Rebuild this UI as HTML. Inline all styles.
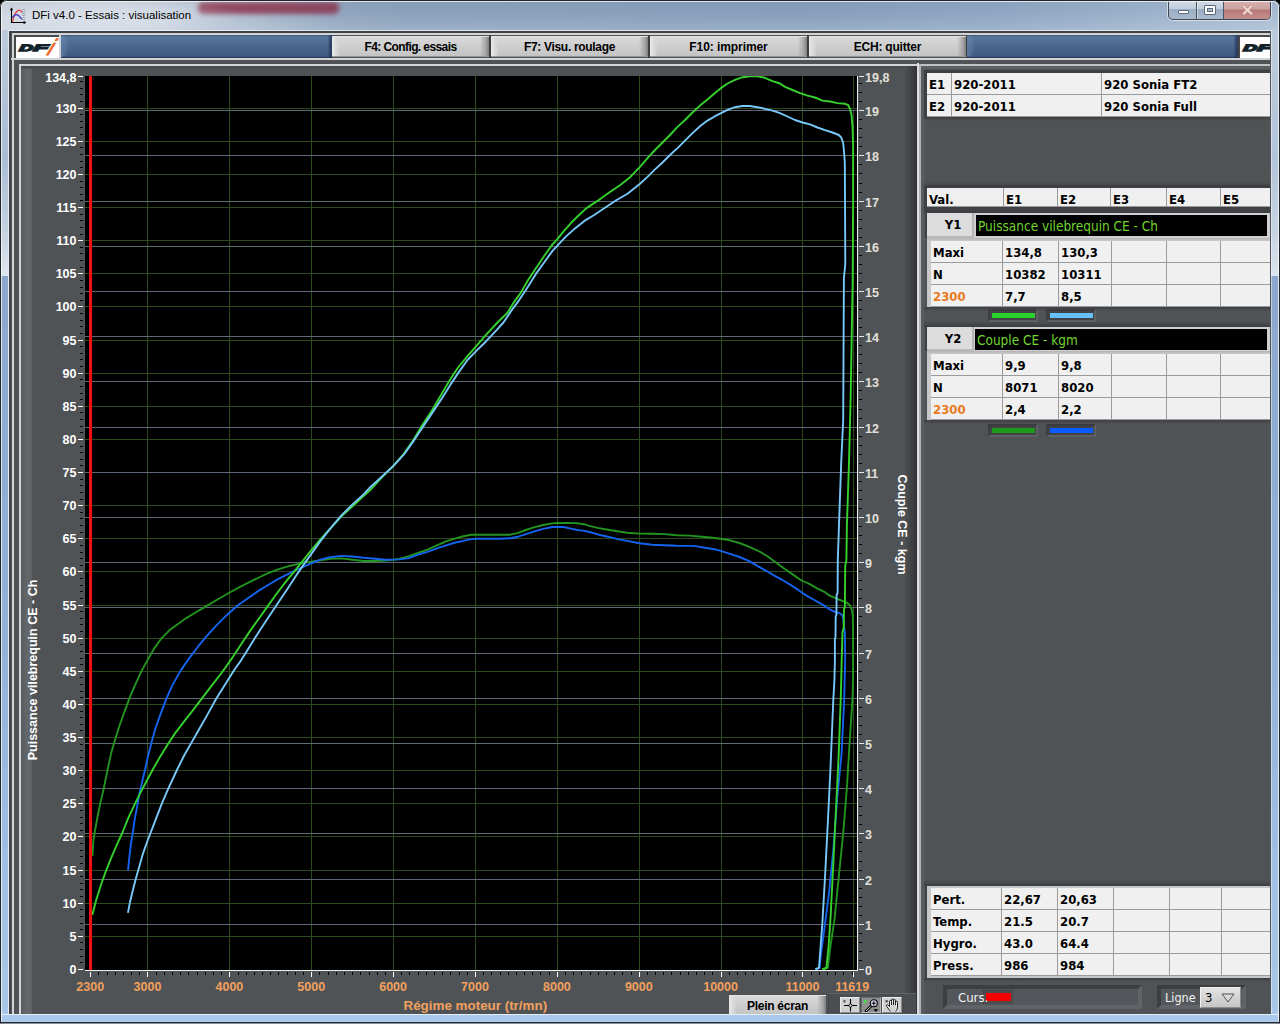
<!DOCTYPE html>
<html lang="fr"><head><meta charset="utf-8"><title>DFi v4.0 - Essais : visualisation</title>
<style>
html,body{margin:0;padding:0;background:#000;}
body{width:1280px;height:1024px;overflow:hidden;position:relative;font-family:"DejaVu Sans Condensed","Liberation Sans",sans-serif;}
div{position:absolute;box-sizing:border-box;}
#win{left:0;top:0;width:1280px;height:1024px;border-radius:7px 7px 2px 2px;overflow:hidden;
 background:linear-gradient(90deg,#cdd5e0 0px,#c3cedc 160px,#b3c1d3 230px,#9db0c6 300px,#91a6bf 345px,#8da3bd 400px,#8ba2bd 560px,#88a0bd 800px,#90a8c4 1000px,#a9bdd3 1280px);}
#win:before{content:"";position:absolute;left:0;top:0;right:0;bottom:0;border:1px solid #20252c;border-bottom:none;border-radius:7px 7px 2px 2px;z-index:50;pointer-events:none}
#win:after{content:"";position:absolute;left:1px;top:1px;right:1px;bottom:2px;border:1px solid rgba(255,255,255,.75);border-bottom:none;border-radius:6px 6px 1px 1px;z-index:50;pointer-events:none}
#frameL{left:0;top:30px;width:9px;height:994px;z-index:40;border-right:1px solid #e2ebf5;background:linear-gradient(180deg,#bccadb 0,#aabdd3 130px,#c4d1e0 200px,#dfe6ef 246px,#8ba8cc 246px,#93b1d6 600px,#a9c8e9 994px)}
#frameR{left:1270px;top:30px;width:10px;height:994px;z-index:40;border-left:1px solid #505458;box-shadow:inset 1px 0 0 rgba(255,255,255,.45);background:linear-gradient(180deg,#bccadb 0,#b2c4d9 130px,#c6d3e2 200px,#dbe4ee 246px,#8ba8cc 246px,#93b1d6 600px,#a9c8e9 994px)}
#frameB{left:0;top:1014px;width:1280px;height:10px;z-index:41;background:#abc9ea;border-top:1px solid #e4eefa;border-bottom:1px solid #8a9098;box-shadow:inset 0 -1px 0 #232a36}
#smear{left:198px;top:2px;width:141px;height:12px;background:rgba(138,46,72,.82);filter:blur(2.6px);border-radius:5px}
#tshade{left:0;top:0;width:1280px;height:30px;background:linear-gradient(180deg,rgba(20,30,50,.05) 0,rgba(255,255,255,0) 50%,rgba(255,255,255,.14) 100%)}
#glow{left:-20px;top:-6px;width:260px;height:42px;background:radial-gradient(ellipse closest-side,rgba(255,255,255,.34) 0,rgba(255,255,255,.2) 55%,rgba(255,255,255,0) 100%)}
#title{left:32px;top:8px;font:11.5px "Liberation Sans",sans-serif;color:#000;white-space:nowrap;line-height:14px}
#client{left:9px;top:31px;width:1262px;height:983px;background:#505356;overflow:hidden;border-left:2px solid #3f4144;border-top:2px solid #3f4144}
.hl{background:#d4d4d4}
.chart{position:absolute;left:0;top:0}
.tbl{background:#9a9a9a;font-weight:bold;font-size:13px;color:#000;box-shadow:-1px -1px 0 2px #3e4043}
.c{background:#f0f0f0;line-height:23px;padding-left:2px;white-space:nowrap;overflow:hidden}
.or{color:#e87a22}
.nb{box-shadow:none}
.btn{top:36px;height:21px;width:157px;background:linear-gradient(90deg,#e9e9e9 0,#dadada 4px,rgba(212,212,212,0) 8px,rgba(200,200,200,0) calc(100% - 9px),#a4a4a4 calc(100% - 3px),#7c7c7c 100%),linear-gradient(180deg,#d9d9d9 0,#cecece 50%,#c4c4c4 100%);border-top:1px solid #e2e2e2;border-bottom:1px solid #969696;font:bold 12px "Liberation Sans",sans-serif;text-align:center;line-height:21px;color:#000;white-space:nowrap}
.bar{top:35px;height:23px;background:linear-gradient(180deg,#4d678c 0,#58759b 2px,#4b668d 50%,#3e577d 100%);box-shadow:inset -3px 0 2px rgba(20,35,70,.55), inset 0 -1px 1px rgba(20,35,70,.5)}
.bar i{position:absolute;display:block;left:0;top:1px;width:8px;height:21px;background:linear-gradient(90deg,rgba(110,140,180,.55),rgba(110,140,180,.25) 70%,rgba(110,140,180,0));border-radius:0 8px 8px 0/0 11px 11px 0}
.logo{top:37px;height:21px;background:#fff;overflow:hidden}
.ylab{background:linear-gradient(180deg,#e6e6e6,#d2d2d2);font:bold 13px "DejaVu Sans Condensed",sans-serif;text-align:center;color:#000}
.blk{background:#000;color:#6fd42c;font:13.5px "DejaVu Sans Condensed",sans-serif;line-height:23px;padding-left:2px;overflow:hidden;white-space:nowrap}
.sw{height:13px;width:50px;background:#404245;border-top:2px solid #393b3e;border-left:2px solid #3c3e41;border-right:2px solid #5e6164;border-bottom:2px solid #5e6164}
.sw i{position:absolute;left:2px;top:2px;width:43px;height:5px;display:block}
</style></head><body>
<div id="win">
<div id="tshade"></div><div id="smear"></div><div id="glow"></div>
<div id="frameL"></div><div id="frameR"></div><div id="frameB"></div>

<svg style="position:absolute;left:9px;top:7px" width="19" height="18" viewBox="0 0 19 18">
<path d="M2.5 1V15.5H16.5" fill="none" stroke="#000" stroke-width="1.1"/>
<path d="M0.8 3.2L2.5 0.6L4.2 3.2zM14.6 13.8L17.4 15.5L14.6 17.2z" fill="#000"/>
<path d="M13.2 2.5h3M13.2 4.5h3M13.2 6.5h3M13.2 8.5h3M13.2 10.5h3M13.2 12.5h3" stroke="#9a9da4" stroke-width="0.9"/>
<path d="M3.6 14.5C4.6 8.5 7.5 3.4 10 3.1C11.6 3 12.6 4.6 13 5.6" fill="none" stroke="#e0403c" stroke-width="1.3"/>
<path d="M3 10.6C4.6 9.2 6 7.6 7.6 7.7C9.6 7.9 11 10.2 13 12.2" fill="none" stroke="#3a34c8" stroke-width="1.3"/>
</svg>
<div id="title">DFi v4.0 - Essais : visualisation</div>
<div style="left:1168px;top:0;width:103px;height:20px;border:1px solid #3e4450;border-top:none;border-radius:0 0 5px 5px;overflow:hidden;background:linear-gradient(180deg,#d3dce8 0,#c3cedc 45%,#9badc3 50%,#a9bace 100%);box-shadow:0 0 0 1px rgba(255,255,255,.55)">
<div style="left:27px;top:0;width:1px;height:20px;background:#4a5260"></div><div style="left:28px;top:0;width:1px;height:20px;background:rgba(255,255,255,.45)"></div>
<div style="left:54px;top:0;width:1px;height:20px;background:#4a5260"></div>
<div style="left:55px;top:0;width:48px;height:20px;background:linear-gradient(180deg,#d6b4b4 0,#cba2a0 45%,#b67876 50%,#c4928e 100%)"></div>
<div style="left:9px;top:10px;width:11px;height:4px;background:#fff;border:1px solid #5a6a7c;border-radius:1px"></div>
<div style="left:35px;top:5px;width:12px;height:10px;background:#fff;border:1px solid #5a6a7c;border-radius:1px"></div>
<div style="left:38px;top:8px;width:6px;height:4px;background:#a9b8ca;border:1px solid #5a6a7c"></div>
<svg style="position:absolute;left:72px;top:4px" width="13" height="12" viewBox="0 0 13 12"><path d="M2.2 1.8L10.8 10.2M10.8 1.8L2.2 10.2" stroke="#b8847c" stroke-width="3.6" stroke-linecap="butt"/><path d="M2.2 1.8L10.8 10.2M10.8 1.8L2.2 10.2" stroke="#f0d6d2" stroke-width="2.2" stroke-linecap="butt"/></svg>
</div>
<div style="left:8px;top:30px;width:1264px;height:1px;background:rgba(235,242,250,.85);z-index:42"></div>
<div id="client"></div>
<div class="hl" style="left:12px;top:33px;width:1259px;height:2px;"></div>
<div class="hl" style="left:12px;top:33px;width:2px;height:981px;"></div>
<div class="hl" style="left:11px;top:58px;width:1260px;height:2px;"></div>
<div class="hl" style="left:19px;top:64px;width:899px;height:2px;"></div>
<div class="hl" style="left:19px;top:64px;width:2px;height:950px;"></div>
<div class="hl" style="left:921px;top:64px;width:350px;height:2px;background:#c2c2c2;"></div>
<div class="hl" style="left:917px;top:63px;width:2px;height:951px;background:#dedede;"></div>
<div class="hl" style="left:919px;top:64px;width:2px;height:950px;background:#b2b2b2;"></div>
<div style="left:21px;top:66px;width:11px;height:948px;background:linear-gradient(90deg,#595c5f,#65686b 60%,#606366)"></div>
<div style="left:21px;top:66px;width:896px;height:3px;background:linear-gradient(180deg,#45484b,#505356)"></div>
<div style="left:905px;top:66px;width:12px;height:948px;background:linear-gradient(90deg,#4c4f52,#45474a 30%,#3a3c40 70%,#303236)"></div>
<div style="left:921px;top:66px;width:4px;height:948px;background:linear-gradient(90deg,#5a5d61,#54575b)"></div>
<div style="left:921px;top:66px;width:350px;height:3px;background:#5b5e62"></div>
<div class="logo" style="left:16px;width:43px;box-shadow:-1px -1px 0 1px #48494c"></div>
<div class="hl" style="left:59px;top:35px;width:2px;height:23px"></div>
<div class="bar" style="left:61px;width:271px"><i></i></div>
<div class="btn" style="left:332px;letter-spacing:-0.59px">F4: Config. essais</div>
<div style="left:489px;top:35px;width:2px;height:23px;background:#3c3e41"></div>
<div class="btn" style="left:491px;letter-spacing:-0.32px">F7: Visu. roulage</div>
<div style="left:648px;top:35px;width:2px;height:23px;background:#3c3e41"></div>
<div class="btn" style="left:650px;letter-spacing:-0.07px">F10: imprimer</div>
<div style="left:807px;top:35px;width:2px;height:23px;background:#3c3e41"></div>
<div class="btn" style="left:809px;letter-spacing:-0.21px">ECH: quitter</div>
<div style="left:966px;top:35px;width:2px;height:23px;background:#3c3e41"></div>
<div class="bar" style="left:967px;width:271px"><i></i></div>
<div class="logo" style="left:1240px;width:31px;box-shadow:-1px -1px 0 1px #48494c"></div>
<svg style="position:absolute;left:16px;top:37px" width="43" height="21" viewBox="0 0 43 21">
<g font-family="Liberation Sans, sans-serif" font-style="italic" font-size="8.8" fill="#12222c" stroke="#12222c" stroke-width="1.7">
<text transform="matrix(2.05,0,-0.14,1,3.2,14.0)">D</text>
<text transform="matrix(2.45,0,-0.14,1,17.6,14.0)">F</text></g>
<text transform="matrix(1,0,-0.42,1,30.0,18.4)" font-family="Liberation Sans, sans-serif" font-style="italic" font-size="22.5" fill="#ee6a2a" stroke="#ee6a2a" stroke-width="0.9">i</text>
</svg>
<div style="left:1240px;top:37px;width:31px;height:21px;overflow:hidden"><svg style="position:absolute;left:0px;top:0px" width="43" height="21" viewBox="0 0 43 21">
<g font-family="Liberation Sans, sans-serif" font-style="italic" font-size="8.8" fill="#12222c" stroke="#12222c" stroke-width="1.7">
<text transform="matrix(2.05,0,-0.14,1,3.2,14.0)">D</text>
<text transform="matrix(2.45,0,-0.14,1,17.6,14.0)">F</text></g>
<text transform="matrix(1,0,-0.42,1,30.0,18.4)" font-family="Liberation Sans, sans-serif" font-style="italic" font-size="22.5" fill="#ee6a2a" stroke="#ee6a2a" stroke-width="0.9">i</text>
</svg></div>
<svg class="chart" width="1280" height="1024" viewBox="0 0 1280 1024">
<rect x="85" y="76" width="772" height="894" fill="#000"/>
<g shape-rendering="crispEdges">
<rect x="147" y="76" width="1" height="894" fill="#2c4a1c"/>
<rect x="229" y="76" width="1" height="894" fill="#2c4a1c"/>
<rect x="311" y="76" width="1" height="894" fill="#2c4a1c"/>
<rect x="393" y="76" width="1" height="894" fill="#2c4a1c"/>
<rect x="475" y="76" width="1" height="894" fill="#2c4a1c"/>
<rect x="557" y="76" width="1" height="894" fill="#2c4a1c"/>
<rect x="639" y="76" width="1" height="894" fill="#2c4a1c"/>
<rect x="721" y="76" width="1" height="894" fill="#2c4a1c"/>
<rect x="802" y="76" width="1" height="894" fill="#2c4a1c"/>
<rect x="853" y="76" width="1" height="894" fill="#2c4a1c"/>
<rect x="85" y="936" width="772" height="1" fill="#2c4a1c"/>
<rect x="85" y="903" width="772" height="1" fill="#2c4a1c"/>
<rect x="85" y="870" width="772" height="1" fill="#2c4a1c"/>
<rect x="85" y="836" width="772" height="1" fill="#2c4a1c"/>
<rect x="85" y="803" width="772" height="1" fill="#2c4a1c"/>
<rect x="85" y="770" width="772" height="1" fill="#2c4a1c"/>
<rect x="85" y="737" width="772" height="1" fill="#2c4a1c"/>
<rect x="85" y="704" width="772" height="1" fill="#2c4a1c"/>
<rect x="85" y="671" width="772" height="1" fill="#2c4a1c"/>
<rect x="85" y="638" width="772" height="1" fill="#2c4a1c"/>
<rect x="85" y="605" width="772" height="1" fill="#2c4a1c"/>
<rect x="85" y="571" width="772" height="1" fill="#2c4a1c"/>
<rect x="85" y="538" width="772" height="1" fill="#2c4a1c"/>
<rect x="85" y="505" width="772" height="1" fill="#2c4a1c"/>
<rect x="85" y="472" width="772" height="1" fill="#2c4a1c"/>
<rect x="85" y="439" width="772" height="1" fill="#2c4a1c"/>
<rect x="85" y="406" width="772" height="1" fill="#2c4a1c"/>
<rect x="85" y="373" width="772" height="1" fill="#2c4a1c"/>
<rect x="85" y="340" width="772" height="1" fill="#2c4a1c"/>
<rect x="85" y="306" width="772" height="1" fill="#2c4a1c"/>
<rect x="85" y="273" width="772" height="1" fill="#2c4a1c"/>
<rect x="85" y="240" width="772" height="1" fill="#2c4a1c"/>
<rect x="85" y="207" width="772" height="1" fill="#2c4a1c"/>
<rect x="85" y="174" width="772" height="1" fill="#2c4a1c"/>
<rect x="85" y="141" width="772" height="1" fill="#2c4a1c"/>
<rect x="85" y="108" width="772" height="1" fill="#2c4a1c"/>
<rect x="85" y="924" width="772" height="1" fill="#5e6977"/>
<rect x="85" y="879" width="772" height="1" fill="#5e6977"/>
<rect x="85" y="833" width="772" height="1" fill="#5e6977"/>
<rect x="85" y="788" width="772" height="1" fill="#5e6977"/>
<rect x="85" y="743" width="772" height="1" fill="#5e6977"/>
<rect x="85" y="698" width="772" height="1" fill="#5e6977"/>
<rect x="85" y="653" width="772" height="1" fill="#5e6977"/>
<rect x="85" y="607" width="772" height="1" fill="#5e6977"/>
<rect x="85" y="562" width="772" height="1" fill="#5e6977"/>
<rect x="85" y="517" width="772" height="1" fill="#5e6977"/>
<rect x="85" y="472" width="772" height="1" fill="#5e6977"/>
<rect x="85" y="427" width="772" height="1" fill="#5e6977"/>
<rect x="85" y="381" width="772" height="1" fill="#5e6977"/>
<rect x="85" y="336" width="772" height="1" fill="#5e6977"/>
<rect x="85" y="291" width="772" height="1" fill="#5e6977"/>
<rect x="85" y="246" width="772" height="1" fill="#5e6977"/>
<rect x="85" y="201" width="772" height="1" fill="#5e6977"/>
<rect x="85" y="155" width="772" height="1" fill="#5e6977"/>
<rect x="85" y="110" width="772" height="1" fill="#5e6977"/>
</g>
<clipPath id="pc"><rect x="85" y="76" width="772" height="894"/></clipPath><g clip-path="url(#pc)">
<polyline points="92.5,855.0 93.4,840.0 95.3,828.8 98.1,813.8 100.9,800.6 103.8,788.4 107.5,770.0 111.2,753.1 115.0,740.0 119.7,725.0 124.4,711.9 130.0,696.9 135.6,683.8 141.2,671.6 147.8,659.4 154.4,648.1 161.9,637.8 169.4,630.3 176.9,624.7 186.2,618.1 195.6,612.5 205.0,606.9 216.2,600.3 227.5,593.8 240.0,586.9 249.4,582.2 258.8,577.5 268.1,573.2 277.5,569.6 286.9,566.6 296.2,564.4 303.8,562.5 311.2,561.6 320.6,560.2 330.0,558.8 341.2,558.4 352.5,559.7 363.8,561.0 375.0,561.0 386.2,560.6 399.4,559.0 408.8,556.2 418.1,552.8 427.5,549.7 436.9,545.3 446.2,541.4 455.6,538.3 463.4,536.2 471.2,534.7 477.5,534.7 499.4,534.7 510.3,534.7 518.1,532.8 525.9,530.0 533.8,527.3 543.1,525.0 552.5,523.4 557.5,523.0 566.6,523.0 575.9,523.1 583.8,524.2 589.4,525.8 598.8,528.1 608.1,529.7 617.5,531.2 626.9,532.8 639.4,533.6 651.9,533.8 664.4,534.1 676.9,535.2 689.4,535.6 701.9,536.7 712.8,537.8 720.6,538.8 730.0,540.3 739.4,543.0 748.8,546.6 758.1,550.8 767.5,556.2 773.8,560.9 780.0,565.4 785.9,569.8 793.7,575.1 801.5,580.5 809.3,583.9 817.1,588.3 824.9,592.2 829.8,595.6 836.6,598.6 842.5,601.0 847.4,603.0 849.8,605.4 851.8,609.8 852.8,615.7 853.0,628.4 853.0,660.0 853.0,681.0 852.4,700.0 849.7,741.0 846.9,787.4 843.4,831.0 838.7,877.6 834.6,918.6 830.5,946.0 827.8,967.8 824.0,969.0" fill="none" stroke="#23941f" stroke-width="1.9" stroke-linejoin="round" stroke-linecap="round"/>
<polyline points="128.1,869.6 129.0,860.6 130.9,843.8 132.8,832.5 134.7,819.4 137.5,804.4 140.3,789.4 145.0,770.0 147.8,756.9 151.6,741.9 155.3,728.8 160.0,715.6 165.6,700.6 172.2,685.6 180.6,670.6 189.1,658.4 197.5,647.2 206.9,635.9 216.2,625.6 225.6,616.2 235.0,607.8 240.0,603.8 249.4,597.2 258.8,590.6 268.1,585.0 277.5,579.4 286.9,574.7 296.2,570.0 303.8,566.6 311.2,563.4 320.6,559.7 330.0,557.2 341.2,555.9 352.5,556.5 363.8,557.8 375.0,558.8 386.2,559.7 399.4,559.4 408.8,558.1 418.1,554.7 427.5,551.9 436.9,548.4 446.2,545.3 455.6,542.5 463.4,540.9 471.2,539.1 477.5,538.8 499.4,538.8 510.3,538.3 518.1,536.7 525.9,534.1 533.8,531.6 543.1,528.9 552.5,527.0 557.5,526.9 563.4,527.0 569.7,528.4 577.5,530.0 583.8,530.9 589.4,532.0 598.8,534.7 608.1,536.7 617.5,539.1 626.9,540.9 639.4,543.3 651.9,544.8 664.4,545.3 676.9,545.8 689.4,545.9 695.6,546.1 705.0,547.7 714.4,549.2 720.6,550.8 730.0,553.9 739.4,557.0 748.8,560.9 758.1,566.4 767.5,571.6 773.8,575.3 780.0,578.6 785.9,582.0 793.7,586.9 801.5,592.2 807.3,596.1 815.2,600.5 823.0,604.9 828.8,608.8 834.7,611.8 839.6,613.2 842.0,614.7 843.3,618.6 844.0,626.4 844.9,633.2 845.2,660.0 844.6,681.0 844.2,700.0 841.5,754.6 837.4,795.6 833.3,850.0 829.2,891.0 825.0,924.0 821.0,954.0 819.6,967.8 817.0,969.0" fill="none" stroke="#1464f0" stroke-width="1.9" stroke-linejoin="round" stroke-linecap="round"/>
<polyline points="92.5,914.0 96.2,900.0 100.9,885.0 105.6,871.9 111.2,857.8 116.9,844.7 122.5,832.5 128.1,818.4 134.7,804.4 141.2,791.2 152.5,770.0 160.0,756.9 167.5,744.7 175.0,733.4 184.4,721.2 193.8,709.1 203.1,696.9 212.5,684.7 221.9,672.5 231.2,659.4 240.0,645.9 249.4,631.9 258.8,618.8 268.1,605.6 277.5,592.5 286.9,580.3 296.2,569.1 303.8,559.7 311.2,550.3 320.6,539.1 330.0,528.8 341.2,516.6 352.5,506.2 363.8,495.9 370.0,490.3 381.2,478.1 393.4,465.9 403.8,453.8 413.1,440.6 422.5,424.7 431.9,410.6 441.2,394.7 450.6,378.8 458.1,367.5 467.5,356.2 475.6,346.9 486.2,334.7 497.5,322.5 507.5,312.8 513.1,303.4 520.6,293.1 528.1,280.0 535.6,268.8 545.0,254.7 552.5,244.4 557.6,238.8 563.8,231.2 571.2,222.8 578.8,215.3 586.2,208.4 597.5,200.9 608.8,192.8 620.0,185.3 629.4,177.8 640.0,166.9 647.5,158.1 655.0,150.0 662.5,142.5 670.0,135.0 677.5,126.9 685.0,120.0 692.5,112.5 700.0,105.6 707.5,99.4 715.0,93.1 721.0,88.1 727.5,83.5 735.0,79.8 742.5,77.2 750.0,76.2 757.5,76.2 765.0,77.8 772.5,81.2 780.0,83.5 785.0,86.9 792.5,90.0 800.0,93.1 807.5,95.6 815.0,97.5 822.5,100.6 830.0,101.5 837.5,103.1 845.0,103.8 848.1,105.0 850.0,108.8 851.5,115.0 852.5,126.2 853.1,145.0 853.1,198.0 852.7,278.0 851.6,341.0 850.6,400.0 849.0,462.5 846.9,525.0 846.4,560.0 845.2,566.0 844.9,607.0 844.0,609.0 843.7,628.0 842.5,632.0 841.7,660.0 841.2,681.0 840.7,700.0 838.7,754.6 836.0,809.0 833.3,864.0 830.5,918.6 828.6,946.0 826.4,967.8 823.0,969.0" fill="none" stroke="#35d22d" stroke-width="1.9" stroke-linejoin="round" stroke-linecap="round"/>
<polyline points="128.1,912.2 130.0,901.9 132.8,890.6 135.6,879.4 139.4,866.2 143.1,853.1 147.8,840.0 152.5,827.8 157.2,815.6 161.9,803.4 167.5,790.3 176.9,770.0 184.4,755.0 191.9,741.9 199.4,728.8 206.9,715.6 216.2,698.8 225.6,683.8 235.0,668.8 240.0,661.9 249.4,646.9 258.8,631.9 268.1,617.8 277.5,603.8 286.9,589.7 296.2,575.6 303.8,564.4 311.2,554.1 320.6,540.9 330.0,528.8 341.2,515.6 352.5,504.4 363.8,494.1 370.0,487.5 381.2,477.2 393.4,465.9 403.8,454.7 413.1,441.6 422.5,427.5 431.9,413.4 441.2,399.4 450.6,384.4 458.1,373.1 467.5,360.0 475.6,351.6 486.2,341.2 497.5,329.1 503.8,322.0 511.2,310.9 518.8,300.6 526.2,289.4 535.6,274.4 545.0,261.2 552.5,250.9 557.6,245.3 565.6,236.9 575.0,228.4 584.4,220.9 593.8,215.3 605.0,207.8 616.2,200.3 627.5,193.8 640.0,183.8 647.5,176.9 655.0,169.4 662.5,162.5 670.0,155.0 677.5,148.1 685.0,140.6 692.5,133.1 700.0,126.2 707.5,120.6 715.0,116.2 721.0,113.1 727.5,109.8 735.0,107.2 742.5,106.0 750.0,106.0 757.5,107.2 765.0,108.8 772.5,110.6 780.0,113.1 787.5,116.5 795.0,120.0 802.5,122.5 810.0,124.4 817.5,127.5 825.0,130.2 832.5,132.5 838.8,135.0 841.2,137.5 843.1,142.5 844.0,151.2 844.8,162.5 845.0,198.0 845.3,264.0 843.9,278.0 843.2,420.0 841.2,462.5 839.0,525.0 837.8,560.0 837.6,593.0 836.6,595.0 836.4,614.7 835.7,616.6 835.5,637.0 834.9,639.0 834.9,660.0 834.4,681.0 833.3,700.0 830.5,768.0 827.8,823.0 825.0,877.6 822.3,924.0 819.0,967.8 816.0,969.0" fill="none" stroke="#78c8fa" stroke-width="1.9" stroke-linejoin="round" stroke-linecap="round"/>
</g>
<g shape-rendering="crispEdges">
<rect x="89" y="76" width="3" height="894" fill="#ee1111"/>
<rect x="85" y="970" width="773" height="1" fill="#f0f0f0"/>
<rect x="857" y="76" width="1" height="895" fill="#f0f0f0"/>
<rect x="78" y="969" width="5" height="1" fill="#fff"/>
<rect x="80" y="962" width="3" height="1" fill="#000"/>
<rect x="80" y="956" width="3" height="1" fill="#000"/>
<rect x="80" y="949" width="3" height="1" fill="#000"/>
<rect x="80" y="942" width="3" height="1" fill="#000"/>
<rect x="78" y="936" width="5" height="1" fill="#fff"/>
<rect x="80" y="929" width="3" height="1" fill="#000"/>
<rect x="80" y="923" width="3" height="1" fill="#000"/>
<rect x="80" y="916" width="3" height="1" fill="#000"/>
<rect x="80" y="909" width="3" height="1" fill="#000"/>
<rect x="78" y="903" width="5" height="1" fill="#fff"/>
<rect x="80" y="896" width="3" height="1" fill="#000"/>
<rect x="80" y="889" width="3" height="1" fill="#000"/>
<rect x="80" y="883" width="3" height="1" fill="#000"/>
<rect x="80" y="876" width="3" height="1" fill="#000"/>
<rect x="78" y="870" width="5" height="1" fill="#fff"/>
<rect x="80" y="863" width="3" height="1" fill="#000"/>
<rect x="80" y="856" width="3" height="1" fill="#000"/>
<rect x="80" y="850" width="3" height="1" fill="#000"/>
<rect x="80" y="843" width="3" height="1" fill="#000"/>
<rect x="78" y="836" width="5" height="1" fill="#fff"/>
<rect x="80" y="830" width="3" height="1" fill="#000"/>
<rect x="80" y="823" width="3" height="1" fill="#000"/>
<rect x="80" y="817" width="3" height="1" fill="#000"/>
<rect x="80" y="810" width="3" height="1" fill="#000"/>
<rect x="78" y="803" width="5" height="1" fill="#fff"/>
<rect x="80" y="797" width="3" height="1" fill="#000"/>
<rect x="80" y="790" width="3" height="1" fill="#000"/>
<rect x="80" y="783" width="3" height="1" fill="#000"/>
<rect x="80" y="777" width="3" height="1" fill="#000"/>
<rect x="78" y="770" width="5" height="1" fill="#fff"/>
<rect x="80" y="764" width="3" height="1" fill="#000"/>
<rect x="80" y="757" width="3" height="1" fill="#000"/>
<rect x="80" y="750" width="3" height="1" fill="#000"/>
<rect x="80" y="744" width="3" height="1" fill="#000"/>
<rect x="78" y="737" width="5" height="1" fill="#fff"/>
<rect x="80" y="730" width="3" height="1" fill="#000"/>
<rect x="80" y="724" width="3" height="1" fill="#000"/>
<rect x="80" y="717" width="3" height="1" fill="#000"/>
<rect x="80" y="711" width="3" height="1" fill="#000"/>
<rect x="78" y="704" width="5" height="1" fill="#fff"/>
<rect x="80" y="697" width="3" height="1" fill="#000"/>
<rect x="80" y="691" width="3" height="1" fill="#000"/>
<rect x="80" y="684" width="3" height="1" fill="#000"/>
<rect x="80" y="677" width="3" height="1" fill="#000"/>
<rect x="78" y="671" width="5" height="1" fill="#fff"/>
<rect x="80" y="664" width="3" height="1" fill="#000"/>
<rect x="80" y="658" width="3" height="1" fill="#000"/>
<rect x="80" y="651" width="3" height="1" fill="#000"/>
<rect x="80" y="644" width="3" height="1" fill="#000"/>
<rect x="78" y="638" width="5" height="1" fill="#fff"/>
<rect x="80" y="631" width="3" height="1" fill="#000"/>
<rect x="80" y="624" width="3" height="1" fill="#000"/>
<rect x="80" y="618" width="3" height="1" fill="#000"/>
<rect x="80" y="611" width="3" height="1" fill="#000"/>
<rect x="78" y="605" width="5" height="1" fill="#fff"/>
<rect x="80" y="598" width="3" height="1" fill="#000"/>
<rect x="80" y="591" width="3" height="1" fill="#000"/>
<rect x="80" y="585" width="3" height="1" fill="#000"/>
<rect x="80" y="578" width="3" height="1" fill="#000"/>
<rect x="78" y="571" width="5" height="1" fill="#fff"/>
<rect x="80" y="565" width="3" height="1" fill="#000"/>
<rect x="80" y="558" width="3" height="1" fill="#000"/>
<rect x="80" y="552" width="3" height="1" fill="#000"/>
<rect x="80" y="545" width="3" height="1" fill="#000"/>
<rect x="78" y="538" width="5" height="1" fill="#fff"/>
<rect x="80" y="532" width="3" height="1" fill="#000"/>
<rect x="80" y="525" width="3" height="1" fill="#000"/>
<rect x="80" y="518" width="3" height="1" fill="#000"/>
<rect x="80" y="512" width="3" height="1" fill="#000"/>
<rect x="78" y="505" width="5" height="1" fill="#fff"/>
<rect x="80" y="499" width="3" height="1" fill="#000"/>
<rect x="80" y="492" width="3" height="1" fill="#000"/>
<rect x="80" y="485" width="3" height="1" fill="#000"/>
<rect x="80" y="479" width="3" height="1" fill="#000"/>
<rect x="78" y="472" width="5" height="1" fill="#fff"/>
<rect x="80" y="465" width="3" height="1" fill="#000"/>
<rect x="80" y="459" width="3" height="1" fill="#000"/>
<rect x="80" y="452" width="3" height="1" fill="#000"/>
<rect x="80" y="446" width="3" height="1" fill="#000"/>
<rect x="78" y="439" width="5" height="1" fill="#fff"/>
<rect x="80" y="432" width="3" height="1" fill="#000"/>
<rect x="80" y="426" width="3" height="1" fill="#000"/>
<rect x="80" y="419" width="3" height="1" fill="#000"/>
<rect x="80" y="412" width="3" height="1" fill="#000"/>
<rect x="78" y="406" width="5" height="1" fill="#fff"/>
<rect x="80" y="399" width="3" height="1" fill="#000"/>
<rect x="80" y="393" width="3" height="1" fill="#000"/>
<rect x="80" y="386" width="3" height="1" fill="#000"/>
<rect x="80" y="379" width="3" height="1" fill="#000"/>
<rect x="78" y="373" width="5" height="1" fill="#fff"/>
<rect x="80" y="366" width="3" height="1" fill="#000"/>
<rect x="80" y="359" width="3" height="1" fill="#000"/>
<rect x="80" y="353" width="3" height="1" fill="#000"/>
<rect x="80" y="346" width="3" height="1" fill="#000"/>
<rect x="78" y="340" width="5" height="1" fill="#fff"/>
<rect x="80" y="333" width="3" height="1" fill="#000"/>
<rect x="80" y="326" width="3" height="1" fill="#000"/>
<rect x="80" y="320" width="3" height="1" fill="#000"/>
<rect x="80" y="313" width="3" height="1" fill="#000"/>
<rect x="78" y="306" width="5" height="1" fill="#fff"/>
<rect x="80" y="300" width="3" height="1" fill="#000"/>
<rect x="80" y="293" width="3" height="1" fill="#000"/>
<rect x="80" y="287" width="3" height="1" fill="#000"/>
<rect x="80" y="280" width="3" height="1" fill="#000"/>
<rect x="78" y="273" width="5" height="1" fill="#fff"/>
<rect x="80" y="267" width="3" height="1" fill="#000"/>
<rect x="80" y="260" width="3" height="1" fill="#000"/>
<rect x="80" y="253" width="3" height="1" fill="#000"/>
<rect x="80" y="247" width="3" height="1" fill="#000"/>
<rect x="78" y="240" width="5" height="1" fill="#fff"/>
<rect x="80" y="234" width="3" height="1" fill="#000"/>
<rect x="80" y="227" width="3" height="1" fill="#000"/>
<rect x="80" y="220" width="3" height="1" fill="#000"/>
<rect x="80" y="214" width="3" height="1" fill="#000"/>
<rect x="78" y="207" width="5" height="1" fill="#fff"/>
<rect x="80" y="200" width="3" height="1" fill="#000"/>
<rect x="80" y="194" width="3" height="1" fill="#000"/>
<rect x="80" y="187" width="3" height="1" fill="#000"/>
<rect x="80" y="181" width="3" height="1" fill="#000"/>
<rect x="78" y="174" width="5" height="1" fill="#fff"/>
<rect x="80" y="167" width="3" height="1" fill="#000"/>
<rect x="80" y="161" width="3" height="1" fill="#000"/>
<rect x="80" y="154" width="3" height="1" fill="#000"/>
<rect x="80" y="147" width="3" height="1" fill="#000"/>
<rect x="78" y="141" width="5" height="1" fill="#fff"/>
<rect x="80" y="134" width="3" height="1" fill="#000"/>
<rect x="80" y="127" width="3" height="1" fill="#000"/>
<rect x="80" y="121" width="3" height="1" fill="#000"/>
<rect x="80" y="114" width="3" height="1" fill="#000"/>
<rect x="78" y="108" width="5" height="1" fill="#fff"/>
<rect x="80" y="101" width="3" height="1" fill="#000"/>
<rect x="80" y="94" width="3" height="1" fill="#000"/>
<rect x="80" y="88" width="3" height="1" fill="#000"/>
<rect x="80" y="81" width="3" height="1" fill="#000"/>
<rect x="78" y="76" width="5" height="1" fill="#fff"/>
<rect x="859" y="969" width="5" height="1" fill="#e8e8e8"/>
<rect x="859" y="960" width="3" height="1" fill="#000"/>
<rect x="859" y="951" width="3" height="1" fill="#000"/>
<rect x="859" y="942" width="3" height="1" fill="#000"/>
<rect x="859" y="933" width="3" height="1" fill="#000"/>
<rect x="859" y="924" width="5" height="1" fill="#e8e8e8"/>
<rect x="859" y="915" width="3" height="1" fill="#000"/>
<rect x="859" y="906" width="3" height="1" fill="#000"/>
<rect x="859" y="897" width="3" height="1" fill="#000"/>
<rect x="859" y="888" width="3" height="1" fill="#000"/>
<rect x="859" y="879" width="5" height="1" fill="#e8e8e8"/>
<rect x="859" y="870" width="3" height="1" fill="#000"/>
<rect x="859" y="861" width="3" height="1" fill="#000"/>
<rect x="859" y="851" width="3" height="1" fill="#000"/>
<rect x="859" y="842" width="3" height="1" fill="#000"/>
<rect x="859" y="833" width="5" height="1" fill="#e8e8e8"/>
<rect x="859" y="824" width="3" height="1" fill="#000"/>
<rect x="859" y="815" width="3" height="1" fill="#000"/>
<rect x="859" y="806" width="3" height="1" fill="#000"/>
<rect x="859" y="797" width="3" height="1" fill="#000"/>
<rect x="859" y="788" width="5" height="1" fill="#e8e8e8"/>
<rect x="859" y="779" width="3" height="1" fill="#000"/>
<rect x="859" y="770" width="3" height="1" fill="#000"/>
<rect x="859" y="761" width="3" height="1" fill="#000"/>
<rect x="859" y="752" width="3" height="1" fill="#000"/>
<rect x="859" y="743" width="5" height="1" fill="#e8e8e8"/>
<rect x="859" y="734" width="3" height="1" fill="#000"/>
<rect x="859" y="725" width="3" height="1" fill="#000"/>
<rect x="859" y="716" width="3" height="1" fill="#000"/>
<rect x="859" y="707" width="3" height="1" fill="#000"/>
<rect x="859" y="698" width="5" height="1" fill="#e8e8e8"/>
<rect x="859" y="689" width="3" height="1" fill="#000"/>
<rect x="859" y="680" width="3" height="1" fill="#000"/>
<rect x="859" y="671" width="3" height="1" fill="#000"/>
<rect x="859" y="662" width="3" height="1" fill="#000"/>
<rect x="859" y="653" width="5" height="1" fill="#e8e8e8"/>
<rect x="859" y="644" width="3" height="1" fill="#000"/>
<rect x="859" y="635" width="3" height="1" fill="#000"/>
<rect x="859" y="625" width="3" height="1" fill="#000"/>
<rect x="859" y="616" width="3" height="1" fill="#000"/>
<rect x="859" y="607" width="5" height="1" fill="#e8e8e8"/>
<rect x="859" y="598" width="3" height="1" fill="#000"/>
<rect x="859" y="589" width="3" height="1" fill="#000"/>
<rect x="859" y="580" width="3" height="1" fill="#000"/>
<rect x="859" y="571" width="3" height="1" fill="#000"/>
<rect x="859" y="562" width="5" height="1" fill="#e8e8e8"/>
<rect x="859" y="553" width="3" height="1" fill="#000"/>
<rect x="859" y="544" width="3" height="1" fill="#000"/>
<rect x="859" y="535" width="3" height="1" fill="#000"/>
<rect x="859" y="526" width="3" height="1" fill="#000"/>
<rect x="859" y="517" width="5" height="1" fill="#e8e8e8"/>
<rect x="859" y="508" width="3" height="1" fill="#000"/>
<rect x="859" y="499" width="3" height="1" fill="#000"/>
<rect x="859" y="490" width="3" height="1" fill="#000"/>
<rect x="859" y="481" width="3" height="1" fill="#000"/>
<rect x="859" y="472" width="5" height="1" fill="#e8e8e8"/>
<rect x="859" y="463" width="3" height="1" fill="#000"/>
<rect x="859" y="454" width="3" height="1" fill="#000"/>
<rect x="859" y="445" width="3" height="1" fill="#000"/>
<rect x="859" y="436" width="3" height="1" fill="#000"/>
<rect x="859" y="427" width="5" height="1" fill="#e8e8e8"/>
<rect x="859" y="418" width="3" height="1" fill="#000"/>
<rect x="859" y="409" width="3" height="1" fill="#000"/>
<rect x="859" y="399" width="3" height="1" fill="#000"/>
<rect x="859" y="390" width="3" height="1" fill="#000"/>
<rect x="859" y="381" width="5" height="1" fill="#e8e8e8"/>
<rect x="859" y="372" width="3" height="1" fill="#000"/>
<rect x="859" y="363" width="3" height="1" fill="#000"/>
<rect x="859" y="354" width="3" height="1" fill="#000"/>
<rect x="859" y="345" width="3" height="1" fill="#000"/>
<rect x="859" y="336" width="5" height="1" fill="#e8e8e8"/>
<rect x="859" y="327" width="3" height="1" fill="#000"/>
<rect x="859" y="318" width="3" height="1" fill="#000"/>
<rect x="859" y="309" width="3" height="1" fill="#000"/>
<rect x="859" y="300" width="3" height="1" fill="#000"/>
<rect x="859" y="291" width="5" height="1" fill="#e8e8e8"/>
<rect x="859" y="282" width="3" height="1" fill="#000"/>
<rect x="859" y="273" width="3" height="1" fill="#000"/>
<rect x="859" y="264" width="3" height="1" fill="#000"/>
<rect x="859" y="255" width="3" height="1" fill="#000"/>
<rect x="859" y="246" width="5" height="1" fill="#e8e8e8"/>
<rect x="859" y="237" width="3" height="1" fill="#000"/>
<rect x="859" y="228" width="3" height="1" fill="#000"/>
<rect x="859" y="219" width="3" height="1" fill="#000"/>
<rect x="859" y="210" width="3" height="1" fill="#000"/>
<rect x="859" y="201" width="5" height="1" fill="#e8e8e8"/>
<rect x="859" y="192" width="3" height="1" fill="#000"/>
<rect x="859" y="183" width="3" height="1" fill="#000"/>
<rect x="859" y="173" width="3" height="1" fill="#000"/>
<rect x="859" y="164" width="3" height="1" fill="#000"/>
<rect x="859" y="155" width="5" height="1" fill="#e8e8e8"/>
<rect x="859" y="146" width="3" height="1" fill="#000"/>
<rect x="859" y="137" width="3" height="1" fill="#000"/>
<rect x="859" y="128" width="3" height="1" fill="#000"/>
<rect x="859" y="119" width="3" height="1" fill="#000"/>
<rect x="859" y="110" width="5" height="1" fill="#e8e8e8"/>
<rect x="859" y="101" width="3" height="1" fill="#000"/>
<rect x="859" y="92" width="3" height="1" fill="#000"/>
<rect x="859" y="83" width="3" height="1" fill="#000"/>
<rect x="859" y="76" width="5" height="1" fill="#e8e8e8"/>
<rect x="90" y="972" width="1" height="5" fill="#fff"/>
<rect x="98" y="972" width="1" height="3" fill="#000"/>
<rect x="107" y="972" width="1" height="3" fill="#000"/>
<rect x="115" y="972" width="1" height="3" fill="#000"/>
<rect x="123" y="972" width="1" height="3" fill="#000"/>
<rect x="131" y="972" width="1" height="3" fill="#000"/>
<rect x="139" y="972" width="1" height="3" fill="#000"/>
<rect x="147" y="972" width="1" height="5" fill="#fff"/>
<rect x="156" y="972" width="1" height="3" fill="#000"/>
<rect x="164" y="972" width="1" height="3" fill="#000"/>
<rect x="172" y="972" width="1" height="3" fill="#000"/>
<rect x="180" y="972" width="1" height="3" fill="#000"/>
<rect x="188" y="972" width="1" height="3" fill="#000"/>
<rect x="197" y="972" width="1" height="3" fill="#000"/>
<rect x="205" y="972" width="1" height="3" fill="#000"/>
<rect x="213" y="972" width="1" height="3" fill="#000"/>
<rect x="221" y="972" width="1" height="3" fill="#000"/>
<rect x="229" y="972" width="1" height="5" fill="#fff"/>
<rect x="238" y="972" width="1" height="3" fill="#000"/>
<rect x="246" y="972" width="1" height="3" fill="#000"/>
<rect x="254" y="972" width="1" height="3" fill="#000"/>
<rect x="262" y="972" width="1" height="3" fill="#000"/>
<rect x="270" y="972" width="1" height="3" fill="#000"/>
<rect x="278" y="972" width="1" height="3" fill="#000"/>
<rect x="287" y="972" width="1" height="3" fill="#000"/>
<rect x="295" y="972" width="1" height="3" fill="#000"/>
<rect x="303" y="972" width="1" height="3" fill="#000"/>
<rect x="311" y="972" width="1" height="5" fill="#fff"/>
<rect x="319" y="972" width="1" height="3" fill="#000"/>
<rect x="328" y="972" width="1" height="3" fill="#000"/>
<rect x="336" y="972" width="1" height="3" fill="#000"/>
<rect x="344" y="972" width="1" height="3" fill="#000"/>
<rect x="352" y="972" width="1" height="3" fill="#000"/>
<rect x="360" y="972" width="1" height="3" fill="#000"/>
<rect x="369" y="972" width="1" height="3" fill="#000"/>
<rect x="377" y="972" width="1" height="3" fill="#000"/>
<rect x="385" y="972" width="1" height="3" fill="#000"/>
<rect x="393" y="972" width="1" height="5" fill="#fff"/>
<rect x="401" y="972" width="1" height="3" fill="#000"/>
<rect x="409" y="972" width="1" height="3" fill="#000"/>
<rect x="418" y="972" width="1" height="3" fill="#000"/>
<rect x="426" y="972" width="1" height="3" fill="#000"/>
<rect x="434" y="972" width="1" height="3" fill="#000"/>
<rect x="442" y="972" width="1" height="3" fill="#000"/>
<rect x="450" y="972" width="1" height="3" fill="#000"/>
<rect x="459" y="972" width="1" height="3" fill="#000"/>
<rect x="467" y="972" width="1" height="3" fill="#000"/>
<rect x="475" y="972" width="1" height="5" fill="#fff"/>
<rect x="483" y="972" width="1" height="3" fill="#000"/>
<rect x="491" y="972" width="1" height="3" fill="#000"/>
<rect x="500" y="972" width="1" height="3" fill="#000"/>
<rect x="508" y="972" width="1" height="3" fill="#000"/>
<rect x="516" y="972" width="1" height="3" fill="#000"/>
<rect x="524" y="972" width="1" height="3" fill="#000"/>
<rect x="532" y="972" width="1" height="3" fill="#000"/>
<rect x="540" y="972" width="1" height="3" fill="#000"/>
<rect x="549" y="972" width="1" height="3" fill="#000"/>
<rect x="557" y="972" width="1" height="5" fill="#fff"/>
<rect x="565" y="972" width="1" height="3" fill="#000"/>
<rect x="573" y="972" width="1" height="3" fill="#000"/>
<rect x="581" y="972" width="1" height="3" fill="#000"/>
<rect x="590" y="972" width="1" height="3" fill="#000"/>
<rect x="598" y="972" width="1" height="3" fill="#000"/>
<rect x="606" y="972" width="1" height="3" fill="#000"/>
<rect x="614" y="972" width="1" height="3" fill="#000"/>
<rect x="622" y="972" width="1" height="3" fill="#000"/>
<rect x="631" y="972" width="1" height="3" fill="#000"/>
<rect x="639" y="972" width="1" height="5" fill="#fff"/>
<rect x="647" y="972" width="1" height="3" fill="#000"/>
<rect x="655" y="972" width="1" height="3" fill="#000"/>
<rect x="663" y="972" width="1" height="3" fill="#000"/>
<rect x="671" y="972" width="1" height="3" fill="#000"/>
<rect x="680" y="972" width="1" height="3" fill="#000"/>
<rect x="688" y="972" width="1" height="3" fill="#000"/>
<rect x="696" y="972" width="1" height="3" fill="#000"/>
<rect x="704" y="972" width="1" height="3" fill="#000"/>
<rect x="712" y="972" width="1" height="3" fill="#000"/>
<rect x="721" y="972" width="1" height="5" fill="#fff"/>
<rect x="729" y="972" width="1" height="3" fill="#000"/>
<rect x="737" y="972" width="1" height="3" fill="#000"/>
<rect x="745" y="972" width="1" height="3" fill="#000"/>
<rect x="753" y="972" width="1" height="3" fill="#000"/>
<rect x="762" y="972" width="1" height="3" fill="#000"/>
<rect x="770" y="972" width="1" height="3" fill="#000"/>
<rect x="778" y="972" width="1" height="3" fill="#000"/>
<rect x="786" y="972" width="1" height="3" fill="#000"/>
<rect x="794" y="972" width="1" height="3" fill="#000"/>
<rect x="802" y="972" width="1" height="5" fill="#fff"/>
<rect x="811" y="972" width="1" height="3" fill="#000"/>
<rect x="819" y="972" width="1" height="3" fill="#000"/>
<rect x="827" y="972" width="1" height="3" fill="#000"/>
<rect x="835" y="972" width="1" height="3" fill="#000"/>
<rect x="843" y="972" width="1" height="3" fill="#000"/>
<rect x="852" y="972" width="1" height="3" fill="#000"/>
<rect x="853" y="972" width="1" height="5" fill="#fff"/>
</g>
<g font-family="Liberation Sans, sans-serif" font-weight="bold" font-size="12.5">
<g fill="#fff" text-anchor="end">
<text x="76.5" y="974.0">0</text>
<text x="76.5" y="941.0">5</text>
<text x="76.5" y="908.0">10</text>
<text x="76.5" y="875.0">15</text>
<text x="76.5" y="841.0">20</text>
<text x="76.5" y="808.0">25</text>
<text x="76.5" y="775.0">30</text>
<text x="76.5" y="742.0">35</text>
<text x="76.5" y="709.0">40</text>
<text x="76.5" y="676.0">45</text>
<text x="76.5" y="643.0">50</text>
<text x="76.5" y="610.0">55</text>
<text x="76.5" y="576.0">60</text>
<text x="76.5" y="543.0">65</text>
<text x="76.5" y="510.0">70</text>
<text x="76.5" y="477.0">75</text>
<text x="76.5" y="444.0">80</text>
<text x="76.5" y="411.0">85</text>
<text x="76.5" y="378.0">90</text>
<text x="76.5" y="345.0">95</text>
<text x="76.5" y="311.0">100</text>
<text x="76.5" y="278.0">105</text>
<text x="76.5" y="245.0">110</text>
<text x="76.5" y="212.0">115</text>
<text x="76.5" y="179.0">120</text>
<text x="76.5" y="146.0">125</text>
<text x="76.5" y="113.0">130</text>
<text x="76.5" y="81.5">134,8</text>
</g>
<g fill="#e2e0da">
<text x="865" y="974.5">0</text>
<text x="865" y="929.5">1</text>
<text x="865" y="884.5">2</text>
<text x="865" y="838.5">3</text>
<text x="865" y="793.5">4</text>
<text x="865" y="748.5">5</text>
<text x="865" y="703.5">6</text>
<text x="865" y="658.5">7</text>
<text x="865" y="612.5">8</text>
<text x="865" y="567.5">9</text>
<text x="865" y="522.5">10</text>
<text x="865" y="477.5">11</text>
<text x="865" y="432.5">12</text>
<text x="865" y="386.5">13</text>
<text x="865" y="341.5">14</text>
<text x="865" y="296.5">15</text>
<text x="865" y="251.5">16</text>
<text x="865" y="206.5">17</text>
<text x="865" y="160.5">18</text>
<text x="865" y="115.5">19</text>
<text x="865" y="82">19,8</text>
</g>
<g fill="#f2a05e" text-anchor="middle">
<text x="90.2" y="991">2300</text>
<text x="147.5" y="991">3000</text>
<text x="229.4" y="991">4000</text>
<text x="311.2" y="991">5000</text>
<text x="393.1" y="991">6000</text>
<text x="475.0" y="991">7000</text>
<text x="556.9" y="991">8000</text>
<text x="638.8" y="991">9000</text>
<text x="720.6" y="991">10000</text>
<text x="802.5" y="991">11000</text>
<text x="852.2" y="991">11619</text>
<text x="475.3" y="1010" font-size="13.4">Régime moteur (tr/mn)</text>
</g>
<text transform="translate(36.5,670) rotate(-90)" text-anchor="middle" fill="#fff">Puissance vilebrequin CE - Ch</text>
<text transform="translate(897.5,524.5) rotate(90)" text-anchor="middle" fill="#fff">Couple CE - kgm</text>
</g>
</svg>
<div class="btn" style="left:729px;top:995px;width:97px;height:20px;letter-spacing:-0.27px;line-height:20px">Plein écran</div>
<div style="left:828px;top:993px;width:88px;height:21px;background:#4b4e51;border-top:1px solid #5f6266;border-left:1px solid #45474a"></div>
<div style="left:840px;top:997px;width:20px;height:16px;background:#d2d2d2;border:1px solid #ececec;border-right-color:#8a8a8a;border-bottom-color:#8a8a8a">
<svg width="18" height="14" viewBox="0 0 18 14" style="position:absolute;left:0;top:0"><rect x="2.5" y="2" width="2" height="2.5" fill="#4f5c4f"/><path d="M9.5 1v12.6M3 7.5h13" stroke="#000" stroke-width="1.1"/><circle cx="9.5" cy="7.5" r="1.5" fill="#fff" stroke="#000" stroke-width="0.9"/></svg></div>
<div style="left:861px;top:997px;width:20px;height:16px;background:#8f8f8f;border:1px solid #6a6a6a;border-right-color:#b8b8b8;border-bottom-color:#b8b8b8">
<svg width="18" height="14" viewBox="0 0 18 14" style="position:absolute;left:0;top:0"><path d="M3.2 1.9v3.6M1.4 3.7h3.6" stroke="#3fe43f" stroke-width="1.3"/><path d="M8.9 8.3L4 13" stroke="#000" stroke-width="2.6" stroke-linecap="round"/><path d="M8.6 8.6L4.3 12.7" stroke="#e8e8e8" stroke-width="0.9" stroke-linecap="round"/><circle cx="11.8" cy="5.3" r="3.5" fill="#dedefa" stroke="#000" stroke-width="1.1"/><path d="M9.7 5.3h4.2M11.8 3.2v4.2" stroke="#000" stroke-width="1.1"/><path d="M11.4 11.3h4.8l-2.4 2.6z" fill="#000"/></svg></div>
<div style="left:882px;top:997px;width:20px;height:16px;background:#d2d2d2;border:1px solid #ececec;border-right-color:#8a8a8a;border-bottom-color:#8a8a8a">
<svg width="18" height="14" viewBox="0 0 18 14" style="position:absolute;left:0;top:0"><rect x="2.5" y="2" width="2.2" height="2.5" fill="#4f5c4f"/><path d="M6.5 8.5V3.5Q6.5 2.5 7.5 2.5Q8.5 2.5 8.5 3.5V7M8.5 3V2Q8.5 1 9.5 1Q10.5 1 10.5 2V7M10.5 2.5Q10.5 1.6 11.5 1.6Q12.5 1.6 12.5 2.5V7.2M12.5 4Q12.5 3.2 13.5 3.2Q14.5 3.2 14.5 4.2V9Q14.5 11.5 12.6 13.4M6.5 8.5L5 7Q4.2 6.3 3.6 7Q3.1 7.7 3.8 8.5L7.4 13.4" fill="#ececec" stroke="#000" stroke-width="0.85" stroke-linejoin="round"/></svg></div>
<div style="left:924px;top:117px;width:347px;height:4px;background:linear-gradient(180deg,#3d3f42,#505356)"></div>
<div style="left:924px;top:182px;width:347px;height:6px;background:linear-gradient(180deg,#505356,#3d3f42)"></div>
<div style="left:924px;top:207px;width:347px;height:6px;background:#404245"></div>
<div style="left:924px;top:307px;width:347px;height:4px;background:linear-gradient(180deg,#3d3f42,#505356)"></div>
<div style="left:924px;top:321px;width:347px;height:6px;background:linear-gradient(180deg,#505356,#3d3f42)"></div>
<div style="left:924px;top:420px;width:347px;height:4px;background:linear-gradient(180deg,#3d3f42,#505356)"></div>
<div style="left:924px;top:880px;width:347px;height:6px;background:linear-gradient(180deg,#505356,#3d3f42)"></div>
<div style="left:924px;top:978px;width:347px;height:4px;background:linear-gradient(180deg,#3d3f42,#505356)"></div>
<div class="tbl " style="left:927px;top:73px;width:345px;height:44px">
<div class="c" style="left:0px;top:0px;width:24px;height:21px">E1</div>
<div class="c" style="left:25px;top:0px;width:149px;height:21px">920-2011</div>
<div class="c" style="left:175px;top:0px;width:169px;height:21px">920 Sonia FT2</div>
<div class="c" style="left:0px;top:22px;width:24px;height:21px">E2</div>
<div class="c" style="left:25px;top:22px;width:149px;height:21px">920-2011</div>
<div class="c" style="left:175px;top:22px;width:169px;height:21px">920 Sonia Full</div>
</div>
<div class="tbl " style="left:927px;top:188px;width:345px;height:19px">
<div class="c" style="left:0px;top:0px;width:76px;height:18px">Val.</div>
<div class="c" style="left:77px;top:0px;width:53px;height:18px">E1</div>
<div class="c" style="left:131px;top:0px;width:52px;height:18px">E2</div>
<div class="c" style="left:184px;top:0px;width:55px;height:18px">E3</div>
<div class="c" style="left:240px;top:0px;width:53px;height:18px">E4</div>
<div class="c" style="left:294px;top:0px;width:50px;height:18px">E5</div>
</div>
<div style="left:927px;top:213px;width:345px;height:25px;background:#d0d0d0;box-shadow:-1px -1px 0 1px #3e4043"></div>
<div class="ylab" style="left:927px;top:213px;width:47px;height:25px;line-height:24px;background:#dcdcdc;padding-left:7px;border-right:2px solid #b4b4b4;border-bottom:2px solid #b8b8b8">Y1</div>
<div class="blk" style="left:976px;top:215px;width:291px;height:21px">Puissance vilebrequin CE - Ch</div>
<div style="left:927px;top:238px;width:345px;height:69px;background:linear-gradient(180deg,#b4b4b4,#cacaca 3px,#c8c8c8)"></div>
<div class="tbl nb" style="left:931px;top:241px;width:341px;height:66px">
<div class="c" style="left:0px;top:0px;width:71px;height:21px">Maxi</div>
<div class="c" style="left:72px;top:0px;width:55px;height:21px">134,8</div>
<div class="c" style="left:128px;top:0px;width:52px;height:21px">130,3</div>
<div class="c" style="left:181px;top:0px;width:54px;height:21px"></div>
<div class="c" style="left:236px;top:0px;width:53px;height:21px"></div>
<div class="c" style="left:290px;top:0px;width:50px;height:21px"></div>
<div class="c" style="left:0px;top:22px;width:71px;height:21px">N</div>
<div class="c" style="left:72px;top:22px;width:55px;height:21px">10382</div>
<div class="c" style="left:128px;top:22px;width:52px;height:21px">10311</div>
<div class="c" style="left:181px;top:22px;width:54px;height:21px"></div>
<div class="c" style="left:236px;top:22px;width:53px;height:21px"></div>
<div class="c" style="left:290px;top:22px;width:50px;height:21px"></div>
<div class="c or" style="left:0px;top:44px;width:71px;height:21px">2300</div>
<div class="c" style="left:72px;top:44px;width:55px;height:21px">7,7</div>
<div class="c" style="left:128px;top:44px;width:52px;height:21px">8,5</div>
<div class="c" style="left:181px;top:44px;width:54px;height:21px"></div>
<div class="c" style="left:236px;top:44px;width:53px;height:21px"></div>
<div class="c" style="left:290px;top:44px;width:50px;height:21px"></div>
</div>
<div class="sw" style="left:988px;top:309px"><i style="background:#2bd12b"></i></div>
<div class="sw" style="left:1046px;top:309px"><i style="background:#66c0ff"></i></div>
<div style="left:927px;top:327px;width:345px;height:24px;background:#d0d0d0;box-shadow:-1px -1px 0 1px #3e4043"></div>
<div class="ylab" style="left:927px;top:327px;width:47px;height:24px;line-height:23px;background:#dcdcdc;padding-left:7px;border-right:2px solid #b4b4b4;border-bottom:2px solid #b8b8b8">Y2</div>
<div class="blk" style="left:975px;top:329px;width:292px;height:21px">Couple CE - kgm</div>
<div style="left:927px;top:351px;width:345px;height:69px;background:linear-gradient(180deg,#b4b4b4,#cacaca 3px,#c8c8c8)"></div>
<div class="tbl nb" style="left:931px;top:354px;width:341px;height:66px">
<div class="c" style="left:0px;top:0px;width:71px;height:21px">Maxi</div>
<div class="c" style="left:72px;top:0px;width:55px;height:21px">9,9</div>
<div class="c" style="left:128px;top:0px;width:52px;height:21px">9,8</div>
<div class="c" style="left:181px;top:0px;width:54px;height:21px"></div>
<div class="c" style="left:236px;top:0px;width:53px;height:21px"></div>
<div class="c" style="left:290px;top:0px;width:50px;height:21px"></div>
<div class="c" style="left:0px;top:22px;width:71px;height:21px">N</div>
<div class="c" style="left:72px;top:22px;width:55px;height:21px">8071</div>
<div class="c" style="left:128px;top:22px;width:52px;height:21px">8020</div>
<div class="c" style="left:181px;top:22px;width:54px;height:21px"></div>
<div class="c" style="left:236px;top:22px;width:53px;height:21px"></div>
<div class="c" style="left:290px;top:22px;width:50px;height:21px"></div>
<div class="c or" style="left:0px;top:44px;width:71px;height:21px">2300</div>
<div class="c" style="left:72px;top:44px;width:55px;height:21px">2,4</div>
<div class="c" style="left:128px;top:44px;width:52px;height:21px">2,2</div>
<div class="c" style="left:181px;top:44px;width:54px;height:21px"></div>
<div class="c" style="left:236px;top:44px;width:53px;height:21px"></div>
<div class="c" style="left:290px;top:44px;width:50px;height:21px"></div>
</div>
<div class="sw" style="left:988px;top:424px"><i style="background:#1c9a1c"></i></div>
<div class="sw" style="left:1046px;top:424px"><i style="background:#0a5cff"></i></div>
<div style="left:927px;top:886px;width:345px;height:92px;background:#c8c8c8;box-shadow:-1px -1px 0 1px #3e4043"></div>
<div class="tbl nb" style="left:931px;top:888px;width:341px;height:88px">
<div class="c" style="left:0px;top:0px;width:70px;height:21px">Pert.</div>
<div class="c" style="left:71px;top:0px;width:55px;height:21px">22,67</div>
<div class="c" style="left:127px;top:0px;width:55px;height:21px">20,63</div>
<div class="c" style="left:183px;top:0px;width:55px;height:21px"></div>
<div class="c" style="left:239px;top:0px;width:51px;height:21px"></div>
<div class="c" style="left:291px;top:0px;width:49px;height:21px"></div>
<div class="c" style="left:0px;top:22px;width:70px;height:21px">Temp.</div>
<div class="c" style="left:71px;top:22px;width:55px;height:21px">21.5</div>
<div class="c" style="left:127px;top:22px;width:55px;height:21px">20.7</div>
<div class="c" style="left:183px;top:22px;width:55px;height:21px"></div>
<div class="c" style="left:239px;top:22px;width:51px;height:21px"></div>
<div class="c" style="left:291px;top:22px;width:49px;height:21px"></div>
<div class="c" style="left:0px;top:44px;width:70px;height:21px">Hygro.</div>
<div class="c" style="left:71px;top:44px;width:55px;height:21px">43.0</div>
<div class="c" style="left:127px;top:44px;width:55px;height:21px">64.4</div>
<div class="c" style="left:183px;top:44px;width:55px;height:21px"></div>
<div class="c" style="left:239px;top:44px;width:51px;height:21px"></div>
<div class="c" style="left:291px;top:44px;width:49px;height:21px"></div>
<div class="c" style="left:0px;top:66px;width:70px;height:21px">Press.</div>
<div class="c" style="left:71px;top:66px;width:55px;height:21px">986</div>
<div class="c" style="left:127px;top:66px;width:55px;height:21px">984</div>
<div class="c" style="left:183px;top:66px;width:55px;height:21px"></div>
<div class="c" style="left:239px;top:66px;width:51px;height:21px"></div>
<div class="c" style="left:291px;top:66px;width:49px;height:21px"></div>
</div>
<div style="left:943px;top:985px;width:199px;height:24px;background:#53565a;border:4px solid #3c3e41;border-right-color:#606367;border-bottom-color:#606367"></div>
<div style="left:983px;top:990px;width:30px;height:14px;background:#4a4c50;border-top:1px solid #404245;border-left:1px solid #404245"></div>
<div style="left:986px;top:993px;width:25px;height:8px;background:#f40000"></div>
<div style="left:958px;top:990px;font:13px 'DejaVu Sans Condensed',sans-serif;color:#f4f4f4;line-height:16px">Curs.</div>
<div style="left:1157px;top:985px;width:89px;height:24px;background:#53565a;border:4px solid #3c3e41;border-right-color:#606367;border-bottom-color:#606367"></div>
<div style="left:1165px;top:990px;font:12.5px 'DejaVu Sans Condensed',sans-serif;color:#f4f4f4;line-height:16px">Ligne</div>
<div style="left:1200px;top:987px;width:41px;height:21px;background:linear-gradient(180deg,#e2e2e2,#c6c6c6);border:1px solid #f0f0f0;border-right-color:#8c8c8c;border-bottom-color:#8c8c8c;font:13px 'DejaVu Sans Condensed',sans-serif;line-height:19px;padding-left:4px;color:#000">3
<svg width="14" height="10" viewBox="0 0 14 10" style="position:absolute;left:20px;top:5px"><path d="M1 1h12l-6 8z" fill="#d8d8d8" stroke="#555" stroke-width="1"/></svg></div>
</div></body></html>
